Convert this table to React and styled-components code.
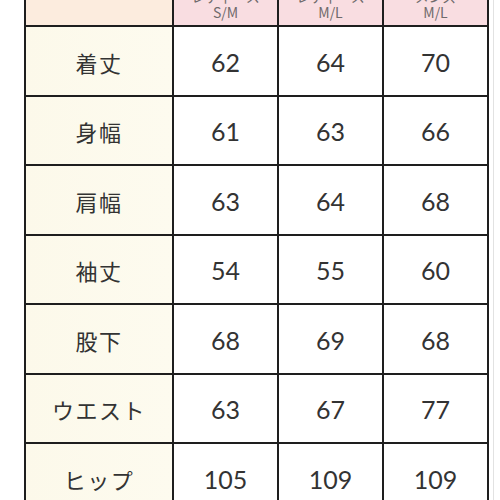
import React from "react";
import styled, { createGlobalStyle } from "styled-components";

const Global = createGlobalStyle`
  html, body { margin: 0; padding: 0; background: #ffffff; overflow: hidden; }
  #root { width: 500px; height: 500px; overflow: hidden; }
`;

const Page = styled.div`
  width: 494px;
  height: 500px;
  border-right: 1px solid #e2e2e2;
  box-sizing: border-box;
  overflow: hidden;
  padding-left: 24px;
`;

const Table = styled.div`
  display: grid;
  grid-template-columns: 146px 103px 103px 103px;
  grid-template-rows: 46px;
  grid-auto-rows: 67.5px;
  gap: 2px;
  background: #1e1e1e;
  padding: 0 2px 2px 2px;
  width: max-content;
  margin-top: -21px;
`;

const HeadCell = styled.div`
  background: ${(p) => (p.$corner ? "#fcecde" : "#f9dde1")};
  display: flex;
  flex-direction: column;
  align-items: center;
  justify-content: flex-end;
  padding-bottom: 5px;
  box-sizing: border-box;
  font-family: "Noto Sans CJK JP", "Noto Sans", sans-serif;
  font-size: 14px;
  line-height: 16px;
  color: #6f6a6b;
  overflow: hidden;
`;

const LabelCell = styled.div`
  background: linear-gradient(90deg, #fcf9ea 0%, #fdfbef 100%);
  display: flex;
  align-items: center;
  justify-content: center;
  padding-top: 2px;
  box-sizing: border-box;
  font-family: "Noto Sans CJK JP", "Noto Sans", sans-serif;
  font-size: 22px;
  letter-spacing: 1.5px;
  color: #333;
`;

const ValueCell = styled.div`
  background: #ffffff;
  display: flex;
  align-items: center;
  justify-content: center;
  padding-top: 2px;
  box-sizing: border-box;
  font-family: Lato, "Open Sans", sans-serif;
  font-size: 25px;
  color: #333;
`;

const heads = [
  ["レディース", "S/M"],
  ["レディース", "M/L"],
  ["メンズ", "M/L"],
];

const rows = [
  ["着丈", 62, 64, 70],
  ["身幅", 61, 63, 66],
  ["肩幅", 63, 64, 68],
  ["袖丈", 54, 55, 60],
  ["股下", 68, 69, 68],
  ["ウエスト", 63, 67, 77],
  ["ヒップ", 105, 109, 109],
];

export default function App() {
  return (
    <>
      <Global />
      <Page>
        <Table>
          <HeadCell $corner />
          {heads.map(([a, b], i) => (
            <HeadCell key={i}>
              <span>{a}</span>
              <span>{b}</span>
            </HeadCell>
          ))}
          {rows.map(([label, ...vals]) => (
            <React.Fragment key={label}>
              <LabelCell>{label}</LabelCell>
              {vals.map((v, j) => (
                <ValueCell key={j}>{v}</ValueCell>
              ))}
            </React.Fragment>
          ))}
        </Table>
      </Page>
    </>
  );
}
